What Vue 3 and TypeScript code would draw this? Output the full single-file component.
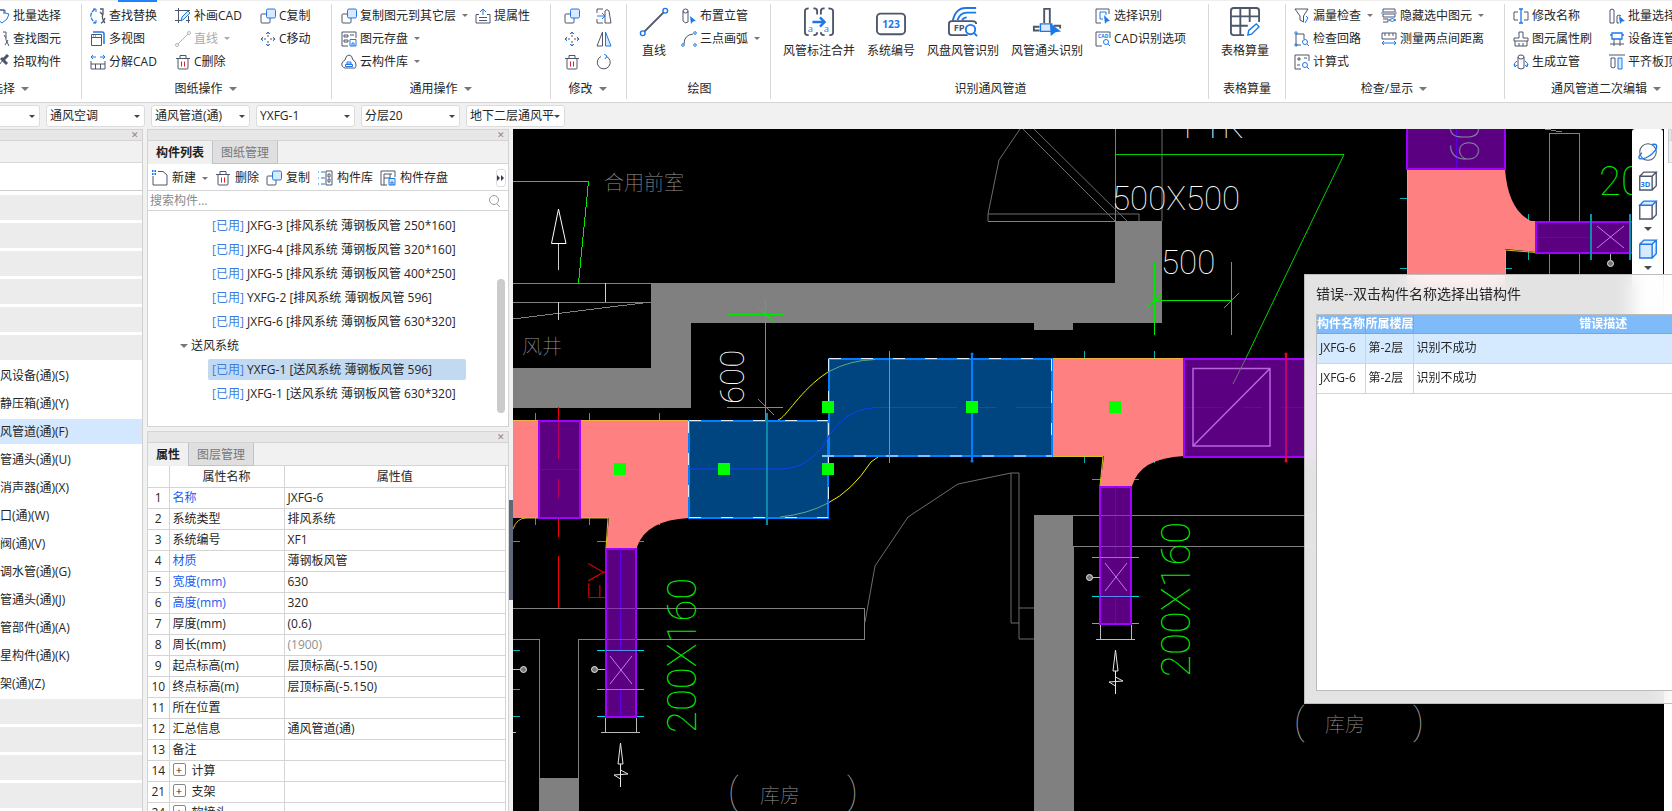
<script setup lang="ts">
import { ref } from 'vue'

interface Tool { icon: string; label: string; drop?: boolean; off?: boolean }
interface Group { cls: string; title: string; menu?: boolean; big?: Tool[]; cols: Tool[][] }

const D = '#4d566b'
const B = '#1c78ea'
const d = `stroke="${D}"`
const b = `stroke="${B}"`
const copyIcon = `<rect ${d} x="1" y="6" width="9" height="9" rx="1"/><rect ${b} fill="#d9e9ff" x="6.500" y="1" width="9" height="9" rx="1.500"/>`
const moveIcon = `<g ${b}><path d="M6 3l2-2 2 2M6 13l2 2 2-2M3 6L1 8l2 2M13 6l2 2-2 2"/></g><path ${d} d="M8 1v5M8 10v5M1 8h5M10 8h5" stroke-dasharray="2 1"/>`
const trashIcon = `<path ${d} d="M1 4.500h14M5 4V1.500h6V4M3 5v9q0 1 1 1h8q1 0 1-1V5"/><path stroke="#e02020" d="M6.500 7.500v5M9.500 7.500v5"/>`
const lens = (x: number, y: number) => `<g ${b}><circle cx="${x}" cy="${y}" r="2.500"/><path d="M${x + 2} ${y + 2}l2 2"/></g>`

const icons: Record<string, string> = {
  batch: `<path ${b} d="M1 6v4l7 5 5-4 2-5-4-1V2H5"/><path ${d} d="M4 2h6v4"/>`,
  find: `<path ${b} d="M6 1Q1 4 2 9t4 6" stroke-dasharray="3 1"/><path ${d} d="M9 1h3v4Q11 9 14 13l1 2M10 4l2 3M14 9l-3 5"/>`,
  pick: `<path ${d} stroke-width="3" d="M10 5l4-4M7 4l6 6"/><path ${d} d="M9 6L2 15"/>`,
  swap: `<path ${b} stroke-width="1.300" stroke-dasharray="4 1" d="M5 1Q0 5 1 9t5 6"/><path ${b} d="M3 1h3v3M3 15h3v-3"/><path ${d} stroke-width="1.300" d="M10 1h3v5q-2 4 2 9M15 10q-2 5-4 5M10 4l3 3"/>`,
  views: `<path ${d} d="M1.500 3.500h10v11h-10zM1.500 6.500h10M3 5h1M5 5h1"/><path ${b} stroke-width="1.500" d="M3 1h9q2 0 2 2v10"/>`,
  split: `<path ${b} d="M1 3h5M3 1L1 3l2 2M10 3h5M13 1l2 2-2 2"/><path ${d} d="M1 7v8h14V7M1 10h14M5.500 10v5M10.500 10v5"/>`,
  patch: `<path ${d} d="M0 2.500h15M3.500 0v15M0 12.500h6M13.500 8v7M11 12.500h4"/><path ${b} fill="#d9e9ff" d="M6 13l1-4 6-6 2 2-6 6z"/>`,
  lineoff: `<path stroke="#b5b5b5" d="M3 13L13 3"/><circle stroke="#b5b5b5" cx="2" cy="14" r="1.500"/><circle stroke="#b5b5b5" cx="14" cy="2" r="1.500"/>`,
  trash: trashIcon, copy: copyIcon, move: moveIcon,
  attr: `<path ${b} d="M8 7V1M5 4l3-3 3 3"/><path ${d} d="M4 6.500H1v8.500h14V6.500h-3M4 9.500h8M4 12.500h8"/>`,
  save: `<path ${d} d="M7 15H1V1h14v6M3 4h4v2H3zM3 9h4v2H3zM9 4h4"/><path ${b} d="M9 8.500h6V15H9zM11 15v-3h2v3"/>`,
  cloud: `<path ${d} d="M4 14Q0 13 1 9q1-2 3-3Q5 1 8 1t4 5q3 1 3 5t-3 3z"/><path ${b} d="M4.500 10.500h7v2h-7zM6 8h4v2H6z"/>`,
  stretch: `<path ${d} d="M1 1h6M1 15h6M1 1v4M1 11v4M9 15h6L13 3Q11 0 9 3z"/><path ${b} d="M1 8h7M6 5l3 3-3 3"/>`,
  mirror: `<path ${d} d="M6.500 1v14H1z"/><path ${b} fill="#d9e9ff" d="M9.500 1v14H15z"/>`,
  rotate: `<path ${d} d="M10 2.300A6.500 6.500 0 1 1 5 2.500"/><path ${b} d="M8 0l3 2-2 3"/>`,
  riser: `<path ${d} d="M2 3v10q2 3 5 1V3"/><ellipse ${d} cx="4.500" cy="3" rx="2.500" ry="2"/><path fill="${B}" stroke="none" d="M9 8l6 5-3 .5-2 2.500z"/>`,
  arc: `<path ${d} d="M3 13Q3 4 12 3"/><g ${b}><circle cx="2" cy="14" r="1.300"/><circle cx="14" cy="2" r="1.300"/><circle cx="14" cy="14" r="1.300"/></g>`,
  selrec: `<path ${d} d="M1 15V1h13v5M1 15h5"/><path ${b} d="M5 4h6v3M5 4v7h3"/><path fill="${B}" stroke="none" d="M9 7l6 6-3 .5-2 2.500z"/>`,
  cadopt: `<path ${d} d="M7 15H1V1h14v6"/><text x="3" y="7" font-size="5" fill="${B}" stroke="none" font-weight="700">CAD</text>${lens(11, 11)}`,
  funnel: `<path ${d} d="M1 1h13L9.500 8v6L6 12V8z"/><path ${b} d="M12 8l2 2-3 5"/>`,
  loop: `<path ${d} d="M2 3h8v5M2 3v11h5"/><circle ${b} cx="2" cy="2" r="1.200"/><circle ${b} cx="2" cy="14" r="1.200"/>${lens(11, 11)}`,
  calc: `<path ${d} d="M7 15H1V1h14v6"/><path ${d} d="M3 5h4M5 3v4M3 11h3M10 4h3"/>${lens(11, 11)}`,
  hide: `<path ${d} d="M2 1h12v3H2zM2 6h12v3H2zM2 11h5v3H2"/><path ${b} d="M1 4v2M15 4v2M8 12q3-3 7 0-4 3-7 0"/>`,
  measure: `<path ${d} d="M1 2h14v6H1zM4 2v3M8 2v3M12 2v3"/><path ${b} d="M1 12h14M3 10l-2 2 2 2M13 10l2 2-2 2"/>`,
  rename: `<path ${d} d="M5 4H1v8h4M11 4h4v8h-4"/><path ${b} stroke-width="1.300" d="M6 1h4M8 1v14M6 15h4"/>`,
  brush: `<path ${d} d="M6 7V1h4v6h5v3H1V7zM2 10v5h12v-5M6 12v3M10 12v3"/>`,
  genriser: `<path ${d} d="M5 3v11q3 2 6 0V3"/><ellipse ${d} cx="8" cy="3" rx="3" ry="2"/><path ${b} d="M4 7q-4 2-2 5M1 10l1 3 2-2M12 7q4 2 2 5M15 10l-1 3-2-2"/>`,
  batchsel: `<path ${d} d="M1 2q2-2 4 0v13H1zM8 8q2-2 4 0M8 8v7h2"/><path fill="${B}" stroke="none" d="M10 8l6 5-3 .5-2 2.500z"/>`,
  device: `<path ${b} stroke-width="1.300" d="M3 2h10v6H3zM1 4h2M13 4h2"/><path ${d} d="M1 13h14M5 8v7M11 8v7"/>`,
  align: `<path ${d} d="M0 1h16M2 4h4v9q-2 2-4 0z"/><path ${b} fill="#d9e9ff" d="M9 4h4v11H9z"/>`,
  newdoc: `<path ${d} d="M6 1.500h5L15 5v10H1V6"/><path ${b} stroke-width="2" stroke-dasharray="1.500 1" d="M0 1h5M0 4h5"/>`,
  library: `<path ${b} d="M1 2h1M4 2h4M1 8h1M4 8h4M1 14h1M4 14h4"/><path ${d} d="M9 1h6v14H9zM11 4h2v3h-2zM11 9h2v3h-2z"/>`,
  store: `<path ${d} d="M7 15H1V1h14v6M4 15V4h8M4 8h6V4"/><path ${b} fill="#d9e9ff" d="M9 8.500h6V15H9zM11 15v-3h2v3"/>`,
  search: `<circle cx="7" cy="7" r="4.500" stroke="#999"/><path stroke="#999" d="M10 11l3 3"/>`,
}

const bigIcons: Record<string, string> = {
  line: `<path ${d} stroke-width="2" d="M6 26L26 6"/><g ${b} fill="#fff" stroke-width="1.500"><circle cx="4" cy="28" r="2.500"/><circle cx="28" cy="4" r="2.500"/></g>`,
  merge: `<path ${d} stroke-width="2" d="M5 1.500q-4 0-4 3V27q0 3 3 3h1M10 1.500h1q3 0 3 3V8M10 30h1q3 0 3-3M22 1.500h-1q-3 0-3 3V8M26 1.500q5 0 5 3V27q0 3-3 3h-1M22 30h-1q-3 0-3-3"/><path ${b} stroke-width="2.500" d="M9 16h12M17 11l5 5-5 5"/><text x="4" y="27" font-size="10" fill="${B}" stroke="none">a</text><text x="21" y="27" font-size="10" fill="${B}" stroke="none">a</text>`,
  number: `<rect ${d} stroke-width="2" x="1" y="7" width="30" height="22" rx="4"/><text x="16" y="22" text-anchor="middle" font-size="11" font-weight="700" fill="${B}" stroke="none">123</text>`,
  fan: `<g ${b} stroke-width="2"><path d="M5 15Q8 1 19 1h11M10 14Q13 6 20 6h10M15 14Q17 11 20 11"/></g><path ${d} stroke-width="2" d="M21 30H4q-3 0-3-3V18q0-3 3-3h22q4 0 4 3"/><text x="6" y="26" font-size="10" font-weight="700" fill="${D}" stroke="none">FP</text><circle ${b} stroke-width="2" fill="#fff" cx="24" cy="24" r="5"/><path ${b} stroke-width="2" d="M28 28l3 3"/>`,
  fitting: `<path ${d} stroke-width="2" d="M13 17V2h6v15M8 21H2v4h6M23 20h7v3"/><path ${b} stroke-width="1.500" fill="#d9e9ff" d="M9 18h12v8H9z"/><path fill="${B}" stroke="none" d="M19 17l12 9-6 1-5 4z"/>`,
  sheet: `<path ${d} stroke-width="2" d="M15 30H4q-3 0-3-3V4q0-3 3-3h24q3 0 3 3v12M1 10h30M1 20h18M11 1v29M21 1v15"/><path ${b} stroke-width="1.500" fill="#fff" d="M19 30l1-5 8-7 3 3-8 8z"/>`,
  orbit: `<circle ${d} stroke-width="1.500" cx="16" cy="16" r="12"/><path ${b} stroke-width="2" d="M7 17Q-2 27 8 26 19 24 27 13 32 3 22 5"/>`,
  cube3d: `<path ${d} stroke-width="2" d="M4 9h18v20H4zM4 9l6-6h18l-6 6M28 3v20l-6 6"/><text x="5" y="24" font-size="11" font-weight="700" fill="${B}" stroke="none">3D</text>`,
  cubetop: `<path ${d} stroke-width="2" d="M4 9h18v20H4zM28 3v20l-6 6"/><path ${b} fill="#d9e9ff" stroke-width="2" d="M4 9l6-6h18l-6 6z"/>`,
  cube: `<path ${b} fill="#d9e9ff" stroke-width="2" d="M4 9h18v20H4zM4 9l6-6h18l-6 6M28 3v20l-6 6"/>`,
}

const t = (icon: string, label: string, extra: Partial<Tool> = {}): Tool => ({ icon, label, ...extra })
const groups: Group[] = [
  { cls: 'g-pick', title: '选择', menu: true, cols: [[t('batch', '批量选择'), t('find', '查找图元'), t('pick', '拾取构件')]] },
  {
    cls: 'g-sheet', title: '图纸操作', menu: true, cols: [
      [t('swap', '查找替换'), t('views', '多视图'), t('split', '分解CAD')],
      [t('patch', '补画CAD'), t('lineoff', '直线', { drop: true, off: true }), t('trash', 'C删除')],
      [t('copy', 'C复制'), t('move', 'C移动')]],
  },
  {
    cls: 'g-common', title: '通用操作', menu: true, cols: [
      [t('copy', '复制图元到其它层', { drop: true }), t('save', '图元存盘', { drop: true }), t('cloud', '云构件库', { drop: true })],
      [t('attr', '提属性')]],
  },
  { cls: 'g-edit', title: '修改', menu: true, cols: [[t('copy', ''), t('move', ''), t('trash', '')], [t('stretch', ''), t('mirror', ''), t('rotate', '')]] },
  { cls: 'g-line', title: '绘图', big: [t('line', '直线')], cols: [[t('riser', '布置立管'), t('arc', '三点画弧', { drop: true })]] },
  {
    cls: 'g-duct', title: '识别通风管道', big: [t('merge', '风管标注合并'), t('number', '系统编号'), t('fan', '风盘风管识别'), t('fitting', '风管通头识别')],
    cols: [[t('selrec', '选择识别'), t('cadopt', 'CAD识别选项')]],
  },
  { cls: 'g-table', title: '表格算量', big: [t('sheet', '表格算量')], cols: [] },
  {
    cls: 'g-check', title: '检查/显示', menu: true, cols: [
      [t('funnel', '漏量检查', { drop: true }), t('loop', '检查回路'), t('calc', '计算式')],
      [t('hide', '隐藏选中图元', { drop: true }), t('measure', '测量两点间距离')]],
  },
  {
    cls: 'g-second', title: '通风管道二次编辑', menu: true, cols: [
      [t('rename', '修改名称'), t('brush', '图元属性刷'), t('genriser', '生成立管')],
      [t('batchsel', '批量选择'), t('device', '设备连管'), t('align', '平齐板顶')]],
  },
]

const combos = [
  { name: '楼层', value: '' }, { name: '专业', value: '通风空调' }, { name: '构件类型', value: '通风管道(通)' },
  { name: '构件', value: 'YXFG-1' }, { name: '分层', value: '分层20' }, { name: '图纸', value: '地下二层通风平' },
]

const kinds = ['通风设备(通)(S)', '\u3000静压箱(通)(Y)', '通风管道(通)(F)', '风管通头(通)(U)', '\u3000消声器(通)(X)', '风口(通)(W)',
  '风阀(通)(V)', '空调水管(通)(G)', '水管通头(通)(J)', '水管部件(通)(A)', '零星构件(通)(K)', '支架(通)(Z)']
const activeKind = ref(2)

const exhaust = ['JXFG-3 [排风系统 薄钢板风管 250*160]', 'JXFG-4 [排风系统 薄钢板风管 320*160]', 'JXFG-5 [排风系统 薄钢板风管 400*250]',
  'YXFG-2 [排风系统 薄钢板风管 596]', 'JXFG-6 [排风系统 薄钢板风管 630*320]']
const supply = ['YXFG-1 [送风系统 薄钢板风管 596]', 'JXFG-1 [送风系统 薄钢板风管 630*320]']
const chosen = ref(supply[0])
const listTools: Tool[] = [t('newdoc', '新建', { drop: true }), t('trash', '删除'), t('copy', '复制'), t('library', '构件库'), t('store', '构件存盘')]

interface Prop { n: number; name: string; value: string; key?: boolean; dim?: boolean; open?: boolean }
const props: Prop[] = [
  { n: 1, name: '名称', value: 'JXFG-6', key: true },
  { n: 2, name: '系统类型', value: '排风系统' },
  { n: 3, name: '系统编号', value: 'XF1' },
  { n: 4, name: '材质', value: '薄钢板风管', key: true },
  { n: 5, name: '宽度(mm)', value: '630', key: true },
  { n: 6, name: '高度(mm)', value: '320', key: true },
  { n: 7, name: '厚度(mm)', value: '(0.6)' },
  { n: 8, name: '周长(mm)', value: '(1900)', dim: true },
  { n: 9, name: '起点标高(m)', value: '层顶标高(-5.150)' },
  { n: 10, name: '终点标高(m)', value: '层顶标高(-5.150)' },
  { n: 11, name: '所在位置', value: '' },
  { n: 12, name: '汇总信息', value: '通风管道(通)' },
  { n: 13, name: '备注', value: '' },
  { n: 14, name: '计算', value: '', open: true },
  { n: 21, name: '支架', value: '', open: true },
  { n: 24, name: '软接头', value: '', open: true },
]

const errors = [
  { name: 'JXFG-6', floor: '第-2层', text: '识别不成功' },
  { name: 'JXFG-6', floor: '第-2层', text: '识别不成功' },
]
const handles = [[620, 469], [724, 469], [828, 469], [828, 407], [972, 407], [1115, 407]]
</script>

<template>
  <div class="app">
    <header class="ribbon">
      <section v-for="g in groups" :key="g.cls" class="group" :class="g.cls">
        <div class="tools">
          <button v-for="i in g.big" :key="i.label" class="big" type="button">
            <svg viewBox="0 0 32 32" fill="none" v-html="bigIcons[i.icon]"></svg>
            <span>{{ i.label }}</span>
          </button>
          <div v-for="(col, ci) in g.cols" :key="ci" class="col">
            <button v-for="i in col" :key="i.icon" class="tool" :class="{ off: i.off }" type="button" :aria-label="i.label || i.icon">
              <svg viewBox="0 0 16 16" fill="none" v-html="icons[i.icon]"></svg>
              <span v-if="i.label">{{ i.label }}</span>
              <i v-if="i.drop" class="caret"></i>
            </button>
          </div>
        </div>
        <div class="title">{{ g.title }}<i v-if="g.menu" class="caret wide"></i></div>
      </section>
    </header>

    <nav class="combos">
      <label v-for="c in combos" :key="c.name" class="combo">
        <select :aria-label="c.name"><option>{{ c.value }}</option></select>
        <i class="caret"></i>
      </label>
    </nav>

    <div class="work">
      <aside class="side">
        <div class="bar"><button class="x" type="button" aria-label="关闭">✕</button></div>
        <div class="blank"></div>
        <div class="field"></div>
        <div class="stack">
          <div v-for="n in 6" :key="n" class="fold"></div>
          <button v-for="(k, i) in kinds" :key="k" type="button" class="kind" :class="{ on: i === activeKind }" @click="activeKind = i">{{ k }}</button>
          <div v-for="n in 4" :key="'b' + n" class="fold"></div>
        </div>
      </aside>

      <div class="middle">
        <section class="panel list">
          <div class="bar"><button class="x" type="button" aria-label="关闭">✕</button></div>
          <div class="tabs"><button class="tab on" type="button">构件列表</button><button class="tab" type="button">图纸管理</button></div>
          <div class="ltools">
            <button v-for="i in listTools" :key="i.label" class="tool" type="button">
              <svg viewBox="0 0 16 16" fill="none" v-html="icons[i.icon]"></svg>
              <span>{{ i.label }}</span>
              <i v-if="i.drop" class="caret"></i>
            </button>
            <button class="more" type="button" aria-label="更多"><svg viewBox="0 0 8 6"><path fill="#333b4f" d="M0 0l3 3-3 3zM4 0l3 3-3 3z" /></svg></button>
          </div>
          <label class="search">
            <input type="text" placeholder="搜索构件..." aria-label="搜索构件">
            <svg viewBox="0 0 16 16" fill="none" v-html="icons.search"></svg>
          </label>
          <div class="treebox">
            <div class="tree">
              <button v-for="r in exhaust" :key="r" class="leaf" type="button" :class="{ on: r === chosen }" @click="chosen = r"><em>[已用]</em> {{ r }}</button>
              <button class="branch" type="button"><i class="caret wide"></i>送风系统</button>
              <button v-for="r in supply" :key="r" class="leaf" type="button" :class="{ on: r === chosen }" @click="chosen = r"><em>[已用]</em> {{ r }}</button>
            </div>
            <div class="track"><div class="thumb"></div></div>
          </div>
        </section>

        <section class="panel props">
          <div class="bar"><button class="x" type="button" aria-label="关闭">✕</button></div>
          <div class="tabs"><button class="tab on" type="button">属性</button><button class="tab" type="button">图层管理</button></div>
          <div class="tablebox">
            <table>
              <colgroup><col class="c1"><col class="c2"><col></colgroup>
              <thead><tr><th></th><th>属性名称</th><th>属性值</th></tr></thead>
              <tbody>
                <tr v-for="p in props" :key="p.n">
                  <td class="num">{{ p.n }}</td>
                  <td :class="{ key: p.key }"><button v-if="p.open" class="plus" type="button" :aria-label="'展开' + p.name">+</button>{{ p.name }}</td>
                  <td :class="{ dim: p.dim }">{{ p.value }}</td>
                </tr>
              </tbody>
            </table>
          </div>
        </section>
      </div>

      <div class="splitter"><button type="button" aria-label="收起"></button></div>

      <main class="canvas">
        <svg class="cad" viewBox="513 129 1151 682" preserveAspectRatio="xMinYMin slice" fill="none">
          <g class="wall">
            <path d="M651 283H1115V221H1162V323H1073V330H1034V323H691V408H513V368H651z" />
            <path d="M1034 515h39v296h-39zM539 778h39v33h-39z" />
          </g>
          <g stroke="#808080" shape-rendering="crispEdges">
            <path d="M513 283.500H651M513 302.500H651M651.500 283V302M513 319L651 302M1115.500 129V221" />
            <path d="M988 221.500H1115M1549.500 274V133.500H1579.500V274M1545 129L1562 132" />
            <path d="M513 608.500H864.500V639.500H578.500V811M513 639.500H539.500V778" />
            <path d="M1073 515.500H1320M1073 546.500H1320M1073.500 546V811" />
          </g>
          <g stroke="#6c6c6c">
            <path d="M1020 129L999 160L988 214V221M1023 129L1115 221M1034 129L1127 221M988 214H1139V221" />
            <path d="M1162 129V221M865 622L875 566L908 517L958 484L1011 473H1019V639H1034M1011 473V623H1019M1019 608H1034" />
          </g>
          <g stroke="#d0d0d0"><path d="M605.500 283V302M558.500 302V320M558.500 243V270" /></g>
          <path stroke="#fff" d="M558.500 209L551.500 243.500H566z" />
          <g stroke="#00e800" shape-rendering="crispEdges">
            <path d="M513 181.500H588.500L578.500 283M765.500 299V422M727 314.500H783M727 407.500H783M758 307L774 322M758 399L774 415" />
            <path d="M1154.500 262V335M1231.500 262V335M1154 300.500H1231M1147 308L1162 293M1224 308L1239 293" />
          </g>
          <g stroke="#00d000"><path d="M1115 154.500H1344L1246 358" /></g>
          <g stroke="#f00000"><path d="M558.500 407V459M558.500 479V498M558.500 518V537M558.500 556V608" /></g>
          <g stroke="#00b4bc" shape-rendering="crispEdges">
            <path d="M535.500 413V525M589.500 413V525M659.500 413V525M1084.500 351V463M1154.500 351V463M1528.500 214V260" />
            <path d="M597 541.500H644M1092 479.500H1139M513 541.500H520M513 650.500H520M513 689.500H520M513 716.500H520M1400 198.500H1412M1400 268.500H1512" />
          </g>

          <g class="mid">
            <text x="604" y="190" font-size="20">合用前室</text>
            <text x="522" y="354" font-size="20">风井</text>
            <text x="760" y="803" font-size="20">库房</text>
            <text x="1325" y="732" font-size="20">库房</text>
            <text x="728" y="804" font-size="36">(</text><text x="847" y="804" font-size="36">)</text>
            <text x="1294" y="734" font-size="36">(</text><text x="1413" y="734" font-size="36">)</text>
          </g>
          <g class="white">
            <text x="1112" y="210" font-size="33">500X500</text>
            <text x="1161" y="274" font-size="33">500</text>
            <text x="1184" y="138" font-size="33">FYK</text>
            <text transform="translate(744 404) rotate(-90)" font-size="33">600</text>
          </g>
          <text class="red" transform="translate(612 601) rotate(-90)" font-size="33">FY</text>

          <g fill="#ff8080">
            <path d="M513 420H689V518Q646 520 637 547V548H606L609 518H513z" />
            <path d="M1052 359H1184V456Q1140 458 1132 486H1100L1104 456H1052z" />
            <path d="M1407 169H1505Q1508 210 1531 221H1536V252L1505 249V290H1407z" />
          </g>
          <g stroke="#d8c020">
            <path d="M513 420.500H689M1052 358.500H1184" stroke="#f0b040" />
            <path d="M580 518H608L606 548M513 529Q517 518 526 518H538M1052 456.500H1103L1100 486M1505 250L1536 252.500M1407.500 169V274M1505.500 250V274" />
            <path stroke="#f0f000" d="M778 420C786 418 800 390 828 372M828 503Q852 491 871 462L878 457" />
          </g>

          <g fill="#5a0080" stroke="#a000ff" stroke-width="2">
            <path d="M539 421H580V518H539zM606 549H636V717H606zM1100 487H1131V624H1100zM1184 359H1330V457H1184zM1407 100H1505V169H1407zM1536 222H1650V253H1536z" />
          </g>
          <g stroke="#5800e8">
            <path d="M540 469.500H579M620.500 549V650M620.500 689V715M1115.500 487V557M1115.500 597V623M1185 407.500H1223M1243 407.500H1262M1281 407.500H1304M1456.500 129V168M1537 237.500H1590" />
          </g>
          <g stroke="#8a3ab0"><path d="M607 608.500H635M607 639.500H635M1101 515.500H1130M1101 546.500H1130" /></g>
          <g stroke="#b866dd" stroke-width="1.500"><path d="M1193 368.500H1270V446H1193zM1193 446L1270 368.500" /></g>
          <g stroke="#c47cf0">
            <path d="M610 656L632 684M632 656L610 684M1105 563L1127 591M1127 563L1105 591M1597 226L1624 248M1624 226L1597 248" />
          </g>
          <g stroke="#c00060"><path d="M558.500 422V459M558.500 479V498" /></g>
          <g stroke="#607870"><path d="M1246 358L1233 384" /></g>
          <text class="slate" transform="translate(1479 162) rotate(-90)" font-size="40">60</text>
          <g stroke="#00dce4" shape-rendering="crispEdges">
            <path d="M597 650.500H605M637 650.500H644M597 689.500H605M637 689.500H644M597 716.500H605M637 716.500H644" />
            <path d="M1092 557.500H1099M1132 557.500H1139M1092 596.500H1099M1132 596.500H1139M1092 623.500H1099M1132 623.500H1139" />
          </g>
          <g stroke="#5a8cf0" shape-rendering="crispEdges"><path d="M606 650.500H637M606 689.500H637M1100 557.500H1132M1100 596.500H1132" /></g>
          <path stroke="#0a90a8" stroke-width="2" d="M1591 214V260M1630 214V260" />
          <path stroke="#f00030" stroke-width="2" d="M1286 353V462" />
          <path stroke="#c0006c" stroke-width="2" d="M1286 360V455" />
          <g fill="#f00030"><circle cx="1286" cy="354" r="1.500" /><circle cx="1286" cy="461" r="1.500" /></g>

          <g fill="#004480" stroke="#0080ff" stroke-width="2">
            <path d="M689 421H828V518H689zM829 359H1052V456H829z" />
          </g>
          <g stroke="#d8ecff" stroke-dasharray="12 20">
            <path d="M689 420.500H828M689 517.500H828M688.500 421V517M828.500 359V517M829 358.500H1052M1051.500 359V456" />
            <path stroke="#80c0ff" stroke-width="2" d="M822 456H1052" />
          </g>
          <path stroke="#1040f8" d="M689 469H779C803 469 817 456 828 438C840 418 856 407.500 880 407.500H957M978 407.500H996M1016 407.500H1051" />
          <path stroke="#68a888" d="M780 517Q808 514 828 503M828 372Q850 360 875 359.500" />
          <path stroke="#0c88a8" stroke-width="2" d="M767 413V525" />
          <path stroke="#00c0f0" d="M889.500 351V463" />
          <path stroke="#0080ff" stroke-width="2" d="M972 353V462" />
          <g fill="#0080ff"><circle cx="972" cy="354" r="1.500" /><circle cx="972" cy="461" r="1.500" /></g>

          <g stroke="#bbb">
            <path d="M605.500 718V732M636.500 718V732M601 732.500H640M1100.500 625V639M1131.500 625V639M1096 639.500H1135M513 732.500H516" />
            <path d="M513 669.500H520M598 669.500H605M1093 577.500H1100M1610.500 254V260" />
          </g>
          <g stroke="#e8e8e8">
            <g fill="#777"><circle cx="523.500" cy="669.500" r="3" /><circle cx="594.500" cy="669.500" r="3" /><circle cx="1089.500" cy="577.500" r="3" /><circle cx="1610.500" cy="263.500" r="3" /></g>
            <path d="M620.500 743L618 764H623zM620.500 764V787M620.500 779L614 775L628 774L620.500 770" />
            <path d="M1115.500 650L1113 671H1118zM1115.500 671V694M1115.500 686L1109 682L1123 681L1115.500 677" />
          </g>
          <g class="green">
            <text transform="translate(696 733) rotate(-90)" font-size="40">200X160</text>
            <text transform="translate(1190 677) rotate(-90)" font-size="40">200X160</text>
            <text x="1599" y="195" font-size="40">20</text>
          </g>
          <g fill="#00ff00"><rect v-for="(h, i) in handles" :key="i" :x="h[0] - 6" :y="h[1] - 6" width="12" height="12" /></g>
        </svg>
        <div class="views">
          <button type="button" aria-label="旋转"><svg viewBox="0 0 32 32" fill="none" v-html="bigIcons.orbit"></svg></button>
          <button type="button" aria-label="三维"><svg viewBox="0 0 32 32" fill="none" v-html="bigIcons.cube3d"></svg></button>
          <button type="button" aria-label="俯视"><svg viewBox="0 0 32 32" fill="none" v-html="bigIcons.cubetop"></svg><i class="caret wide"></i></button>
          <button type="button" aria-label="实体"><svg viewBox="0 0 32 32" fill="none" v-html="bigIcons.cube"></svg><i class="caret wide"></i></button>
        </div>
      </main>

      <aside class="dock"><div class="bar"></div><div class="blank"></div></aside>

      <section class="dialog" role="dialog" aria-labelledby="dlg">
        <h2 id="dlg">错误--双击构件名称选择出错构件</h2>
        <div class="errbox">
          <table>
            <colgroup><col class="e1"><col class="e1"><col></colgroup>
            <thead><tr><th>构件名称</th><th>所属楼层</th><th>错误描述</th></tr></thead>
            <tbody>
              <tr v-for="(e, i) in errors" :key="i" :class="{ on: i === 0 }"><td>{{ e.name }}</td><td>{{ e.floor }}</td><td>{{ e.text }}</td></tr>
            </tbody>
          </table>
        </div>
      </section>
    </div>
  </div>
</template>

<style>
body { margin: 0; overflow: hidden; }
</style>

<style scoped>
.app { display: flex; flex-direction: column; height: 100vh; overflow: hidden; background: #f1f1f1; color: #262626; font: 12px/16px "Open Sans", "Noto Sans CJK SC", sans-serif; white-space: nowrap; }
.app * { box-sizing: border-box; }
button, select, input { font: inherit; color: inherit; border: 0; padding: 0; margin: 0; background: none; }
svg { flex: none; }
.caret { flex: none; width: 0; height: 0; border: 3px solid transparent; border-top-color: #777; border-bottom: 0; }
.caret.wide { border-width: 4px 4px 0; }

.ribbon { flex: none; display: flex; height: 103px; background: #fff; border-top: 1px solid #eee; border-bottom: 1px solid #d4d4d4; position: relative; }
.ribbon::before { content: ""; position: absolute; left: 118px; top: -1px; width: 39px; height: 2px; background: #1c84ff; }
.group { flex: none; display: flex; flex-direction: column; justify-content: space-between; margin: 3px 0; border-right: 1px solid #d8d8d8; overflow: hidden; }
.tools { display: flex; }
.col { display: flex; flex-direction: column; flex: none; }
.tool { display: flex; align-items: center; gap: 3px; height: 23px; }
.tool svg { width: 16px; height: 16px; }
.tool .caret { margin-left: 3px; }
.tool.off { color: #aaa; }
.tool.off .caret { border-top-color: #aaa; }
.big { display: flex; flex-direction: column; align-items: center; gap: 6px; padding-top: 3px; }
.big svg { width: 30px; height: 30px; }
.title { display: flex; align-items: center; justify-content: center; gap: 6px; height: 20px; }
.g-pick { width: 82px; }
.g-pick .tools { margin-left: -6px; }
.g-pick .title { justify-content: flex-start; margin-left: -9px; }
.g-sheet { width: 250px; padding-left: 8px; }
.g-sheet .col { width: 85px; }
.g-sheet .title, .g-common .title { padding-right: 10px; }
.g-common { width: 219px; padding-left: 9px; }
.g-common .tools { gap: 7px; }
.g-edit { width: 76px; padding-left: 13px; }
.g-edit .tools { gap: 16px; }
.g-edit .title { padding-right: 15px; }
.g-line { width: 144px; padding-left: 12px; }
.g-line .tools { gap: 12px; }
.g-line .title { padding-right: 10px; }
.g-duct { width: 438px; padding-left: 12px; }
.g-duct .tools { gap: 12px; }
.g-duct .title { padding-right: 10px; }
.g-table { width: 77px; }
.g-table .tools { justify-content: center; padding-right: 4px; }
.g-check { width: 219px; padding-left: 8px; }
.g-check .tools { gap: 8px; }
.g-check .title { padding-right: 10px; }
.g-second { flex: 1 0 240px; border: 0; padding-left: 8px; }
.g-second .col { width: 96px; }
.g-second .title { justify-content: flex-start; padding-left: 38px; }

.combos { flex: none; display: flex; gap: 6px; height: 26px; padding: 2px 0; }
.combo { position: relative; width: 99px; height: 22px; }
.combo:first-child { width: 40px; }
.combo select { appearance: none; width: 100%; height: 22px; padding: 0 10px 0 3px; background: #fff; border: 1px solid #dcdcdc; border-radius: 3px; overflow: hidden; }
.combo:first-child select { border-left: 0; border-radius: 0 3px 3px 0; }
.combo .caret { position: absolute; right: 5px; top: 10px; border-top-color: #444; }

.work { flex: 1; min-height: 0; display: flex; position: relative; overflow: hidden; }
.bar { flex: none; height: 12px; display: flex; justify-content: flex-end; align-items: center; background: #e7e7e7; border: 1px solid #d4d4d4; padding-right: 1px; }
.x { width: 12px; height: 10px; font-size: 9px; line-height: 10px; color: #888; text-align: center; }
.side { flex: none; width: 143px; display: flex; flex-direction: column; background: #fff; border-right: 1px solid #d0d0d0; overflow: hidden; }
.side .bar { border-left: 0; border-right: 0; }
.blank { flex: none; height: 22px; background: #f1f1f1; border-bottom: 1px solid #d8d8d8; }
.field { flex: none; height: 28px; border-bottom: 1px solid #ccc; border-radius: 0 4px 0 0; margin-bottom: 4px; }
.stack { display: flex; flex-direction: column; gap: 3px; align-items: stretch; }
.fold { flex: none; height: 25px; background: #ececec; }
.kind { flex: none; height: 25px; padding-top: 1px; text-align: left; white-space: pre; text-indent: -12px; }
.kind.on { background: #d3e7ff; }

.middle { flex: none; width: 362px; margin-left: 4px; display: flex; flex-direction: column; gap: 4px; }
.panel { display: flex; flex-direction: column; border: 1px solid #d4d4d4; border-top: 0; background: #fff; }
.panel .bar { border-left: 0; border-right: 0; }
.list { flex: none; height: 298px; }
.props { flex: 1; min-height: 0; border-bottom: 0; overflow: hidden; }
.tabs { flex: none; display: flex; height: 23px; background: #f1f1f1; border-bottom: 1px solid #d4d4d4; }
.tab { padding: 1px 8px 0; height: 23px; background: #dfdfdf; border: 1px solid #bfc3cc; border-width: 0 1px 1px 0; color: #777; }
.tab.on { background: #f0f0f0; color: #222; font-weight: 600; border-bottom: 0; }
.ltools { flex: none; display: flex; align-items: center; gap: 7px; height: 27px; padding: 2px 2px 0 4px; border-bottom: 1px solid #d4d4d4; }
.ltools .tool { gap: 4px; }
.ltools .caret { margin-left: 2px; }
.more { margin-left: auto; width: 10px; height: 18px; border: 1px solid #ddd; border-radius: 3px; }
.more svg { display: block; width: 8px; height: 6px; }
.search { flex: none; display: flex; align-items: center; height: 20px; padding: 1px 5px 0 2px; border-bottom: 1px solid #d4d4d4; }
.search input { flex: 1; outline: 0; min-width: 0; }
.search input::placeholder { color: #8a8a8a; opacity: 1; }
.search svg { width: 16px; height: 16px; }
.treebox { flex: 1; display: flex; padding: 4px 3px 0 60px; }
.tree { flex: 1; display: flex; flex-direction: column; align-items: flex-start; }
.leaf { height: 21px; width: 258px; margin-bottom: 3px; padding-left: 4px; text-align: left; border-radius: 2px; }
.leaf em { font-style: normal; color: #3c7de0; }
.leaf.on { background: #c2d9f2; }
.branch { display: flex; align-items: center; gap: 3px; height: 21px; margin: 0 0 3px -28px; }
.track { width: 8px; padding-top: 64px; }
.thumb { height: 134px; border-radius: 4px; background: #cbcbcb; }

.tablebox { padding-right: 2px; overflow: hidden; }
table { width: 100%; border-collapse: collapse; table-layout: fixed; }
.c1 { width: 21px; }
.c2 { width: 115px; }
.props th, .props td { height: 21px; padding: 1px 3px 0; border: 1px solid #d4d4d4; border-width: 0 1px 1px 0; font-weight: 400; text-align: left; line-height: 16px; }
.props th { text-align: center; }
.props td.num { text-align: center; padding: 1px 0 0; }
.key { color: #1a5cf0; }
.dim { color: #909090; }
.plus { width: 13px; height: 13px; margin-right: 6px; border: 1px solid #888; border-radius: 2px; line-height: 11px; font-size: 11px; vertical-align: 1px; }

.splitter { flex: none; width: 4px; display: flex; align-items: flex-start; padding-top: 371px; }
.splitter button { width: 4px; height: 100px; background: #5f6879; }
.canvas { flex: 1; min-width: 0; position: relative; background: #000; overflow: hidden; }
.cad { display: block; width: 100%; height: 100%; font-family: Roboto, "Noto Sans CJK SC", sans-serif; font-weight: 100; }
.wall { fill: #808080; }
.mid { fill: #9a9a9a; }
.white { fill: #fff; }
.red { fill: #f00000; }
.green { fill: #00f000; }
.slate { fill: #8080a0; }
.views { position: absolute; right: 1px; top: 0; width: 31px; height: 300px; background: #fff; border-radius: 3px; display: flex; flex-direction: column; align-items: center; gap: 7px; padding-top: 12px; }
.views button { display: flex; flex-direction: column; align-items: center; gap: 6px; }
.views svg { width: 22px; height: 22px; display: block; }
.views .caret { border-top-color: #444b5c; }
.dock { flex: none; width: 8px; padding-left: 4px; background: #fff; }
.dock .blank, .dock .bar { border-left: 1px solid #c8c8d0; padding: 0; }

.dialog { position: absolute; left: 1304px; top: 145px; width: 504px; height: 430px; padding: 0 12px 12px 11px; display: flex; flex-direction: column; border: 1px solid #bdbdbd; background: rgba(255, 255, 255, 0.89); backdrop-filter: blur(10px); }
.dialog h2 { flex: none; margin: 0; height: 39px; font-size: 14px; font-weight: 400; line-height: 38px; }
.errbox { flex: 1; background: #fff; border: 1px solid #bbb; }
.e1 { width: 48px; }
.errbox th { height: 18px; padding: 0; line-height: 16px; background: #7fbaf9; color: #fff; font-weight: 600; border: 1px solid #6aa9ee; border-left: 0; border-top: 0; overflow: hidden; }
.errbox td { height: 30px; padding: 0 3px; border: 1px solid #d4d4d4; border-left: 0; border-top: 0; }
.errbox tr.on { background: #d5e9ff; }
</style>
